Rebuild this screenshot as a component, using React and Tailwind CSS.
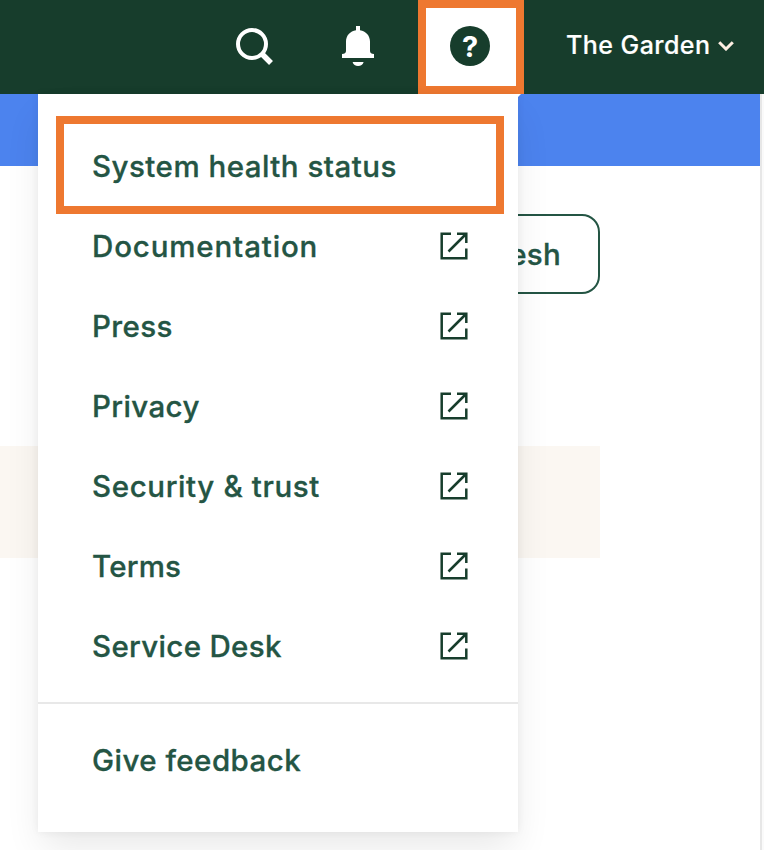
const menuItems = [
  { label: "System health status", external: false, tracking: "tracking-[0.48px]" },
  { label: "Documentation", external: true, tracking: "tracking-[0.85px]" },
  { label: "Press", external: true, tracking: "tracking-[0.35px]" },
  { label: "Privacy", external: true, tracking: "tracking-[0.38px]" },
  { label: "Security & trust", external: true, tracking: "tracking-[0.62px]" },
  { label: "Terms", external: true, tracking: "tracking-[0.2px]" },
  { label: "Service Desk", external: true, tracking: "tracking-[0.33px]" },
];

function SearchIcon() {
  return (
    <svg width="40" height="40" viewBox="0 0 40 40" fill="none" stroke="#fff" strokeWidth="4">
      <circle cx="16" cy="16" r="14" />
      <path d="M25.500 25.500l9.500 9.500" strokeWidth="5.500" />
    </svg>
  );
}

function BellIcon() {
  return (
    <svg width="32" height="40" viewBox="0 0 32 40" fill="#fff">
      <path d="M14 0h4v4.200c5.800.9 10 5.400 10 11.300V25c0 2 1.500 3 4 3v4H0v-4c2.500 0 4-1 4-3v-9.500C4 9.600 8.200 5.100 14 4.200z" />
      <path d="M10.600 36h11c-.6 2.500-2.800 4-5.500 4s-4.900-1.500-5.500-4z" />
    </svg>
  );
}

function ExternalIcon() {
  return (
    <svg width="28" height="28" viewBox="0 0 28 28" fill="none" stroke="#173d2c" strokeWidth="2.500">
      <path d="M11 1.700H1.700v24.600h24.600V16.500" />
      <path d="M17 1.700h9.300V11M26 2L8.500 19.500" />
    </svg>
  );
}

function Header() {
  return (
    <header className="flex h-[94px] bg-[#173d2c] text-white">
      <div className="flex w-[418px] shrink-0 items-start gap-[66px] pl-[236px]">
        <button className="pt-7"><SearchIcon /></button>
        <button className="pt-[26px]"><BellIcon /></button>
      </div>
      <button className="flex h-[94px] w-[106px] shrink-0 items-center justify-center border-8 border-[#ee7830] bg-white">
        <span className="mr-[2px] mb-[2px] flex size-10 items-center justify-center rounded-full bg-[#173d2c] text-[29px] leading-none font-bold">
          ?
        </span>
      </button>
      <button className="flex items-center gap-2 pb-[3px] pl-[42px] text-[25px] font-medium tracking-[0.45px] whitespace-nowrap [-webkit-text-stroke:0.2px]">
        The Garden
        <svg width="16" height="10" viewBox="0 0 16 10" fill="none" stroke="#fdeee2" strokeWidth="3">
          <path d="M1.200 1.200L8 8l6.800-6.800" />
        </svg>
      </button>
    </header>
  );
}

function HelpMenu() {
  return (
    <nav className="absolute top-[94px] left-[38px] h-[738px] w-[480px] bg-white text-[29.500px] font-medium text-[#245544] shadow-[0_0_8px_rgba(0,0,0,0.06),0_20px_36px_-4px_rgba(0,0,0,0.09)] [-webkit-text-stroke:0.3px]">
      <ul className="pt-8 pb-4">
        {menuItems.map((item) => (
          <li key={item.label} className="flex h-20 items-center justify-between pr-[50px] pl-[54px]">
            <span className={item.tracking}>{item.label}</span>
            {item.external && <ExternalIcon />}
          </li>
        ))}
      </ul>
      <div className="border-t-2 border-[#e8e8e8] pt-4">
        <div className="flex h-20 items-center pl-[54px]">
          <span className="tracking-[0.47px]">Give feedback</span>
        </div>
      </div>
      <div className="pointer-events-none absolute top-[22px] left-[18px] h-[98px] w-[448px] border-8 border-[#ee7830]" />
      <div className="absolute top-0 left-full size-[3px] bg-white [clip-path:polygon(0_0,100%_0,0_100%)]" />
    </nav>
  );
}

export default function App() {
  return (
    <div className="relative flex h-[850px] w-[764px] flex-col overflow-hidden bg-white font-['Inter',sans-serif]">
      <Header />
      <div className="flex flex-1">
        <main className="w-[760px]">
          <div className="h-[72px] bg-[#4c83ee]" />
          <div className="flex w-[600px] justify-end pt-12">
            <button className="flex h-20 w-[210px] items-center justify-end rounded-[18px] border-2 border-[#245544] pr-[37px] text-[29.500px] font-medium tracking-[0.3px] text-[#245544] [-webkit-text-stroke:0.3px]">
              Refresh
            </button>
          </div>
          <div className="mt-[152px] h-28 w-[600px] bg-[#fbf7f2]" />
        </main>
        <div className="w-1 border-l-2 border-[#e7e7e7] bg-[#fafafa]" />
      </div>
      <HelpMenu />
    </div>
  );
}
